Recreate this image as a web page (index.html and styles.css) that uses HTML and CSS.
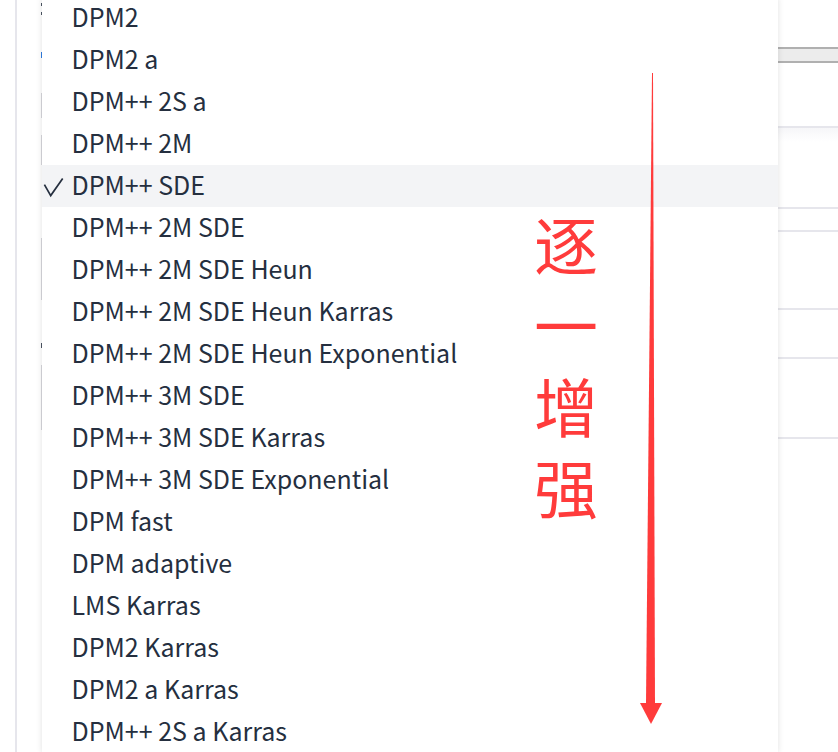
FILE: index.html
```html
<!DOCTYPE html>
<html lang="zh">
<head>
<meta charset="utf-8">
<title>Sampler</title>
<link rel="stylesheet" href="styles.css">
</head>
<body>
<div class="page">
  <div class="rail"></div>
  <div class="form">
    <div class="col-left">
      <div class="mk dark m1"></div>
      <div class="mk dark m2"></div>
      <div class="mk blue m3"></div>
      <div class="mk grey m4"></div>
      <div class="mk grey m5"></div>
      <div class="mk grey m6"></div>
      <div class="mk dark m7"></div>
      <div class="mk grey m8"></div>
    </div>
    <div class="col-right">
      <div class="track"></div>
      <div class="sec s1"></div>
      <div class="sec s2"></div>
      <div class="sec s3"></div>
      <div class="sec s4"></div>
      <div class="sec s5"></div>
      <div class="sec s6"></div>
    </div>
  </div>
</div>

<ul class="menu">
  <li class="opt"><span class="chk"></span><span class="lbl">DPM2</span></li>
  <li class="opt"><span class="chk"></span><span class="lbl">DPM2 a</span></li>
  <li class="opt"><span class="chk"></span><span class="lbl">DPM++ 2S a</span></li>
  <li class="opt"><span class="chk"></span><span class="lbl">DPM++ 2M</span></li>
  <li class="opt selected"><span class="chk"><svg width="30" height="42" viewBox="0 0 30 42"><polyline points="2.4,19.6 8.7,30.6 20.7,13.4" fill="none" stroke="#252f3f" stroke-width="1.7" stroke-linejoin="miter"/></svg></span><span class="lbl">DPM++ SDE</span></li>
  <li class="opt"><span class="chk"></span><span class="lbl">DPM++ 2M SDE</span></li>
  <li class="opt"><span class="chk"></span><span class="lbl">DPM++ 2M SDE Heun</span></li>
  <li class="opt"><span class="chk"></span><span class="lbl">DPM++ 2M SDE Heun Karras</span></li>
  <li class="opt"><span class="chk"></span><span class="lbl">DPM++ 2M SDE Heun Exponential</span></li>
  <li class="opt"><span class="chk"></span><span class="lbl">DPM++ 3M SDE</span></li>
  <li class="opt"><span class="chk"></span><span class="lbl">DPM++ 3M SDE Karras</span></li>
  <li class="opt"><span class="chk"></span><span class="lbl">DPM++ 3M SDE Exponential</span></li>
  <li class="opt"><span class="chk"></span><span class="lbl">DPM fast</span></li>
  <li class="opt"><span class="chk"></span><span class="lbl">DPM adaptive</span></li>
  <li class="opt"><span class="chk"></span><span class="lbl">LMS Karras</span></li>
  <li class="opt"><span class="chk"></span><span class="lbl">DPM2 Karras</span></li>
  <li class="opt"><span class="chk"></span><span class="lbl">DPM2 a Karras</span></li>
  <li class="opt"><span class="chk"></span><span class="lbl">DPM++ 2S a Karras</span></li>
</ul>

<div class="note">
  <div class="ch">逐</div>
  <div class="ch">一</div>
  <div class="ch">增</div>
  <div class="ch">强</div>
</div>

<svg class="arrow" width="838" height="752" viewBox="0 0 838 752">
  <polygon points="652,73 653,73 655,703 646,703" fill="#ff3b3b"/>
  <polygon points="640,703 662,703 651,724" fill="#ff3b3b"/>
</svg>
</body>
</html>
```
FILE: styles.css
```css
html, body {
  margin: 0;
  padding: 0;
  background: #ffffff;
}
body {
  position: relative;
  width: 838px;
  height: 752px;
  overflow: hidden;
  font-family: "Noto Sans CJK SC", "Noto Sans", sans-serif;
}

/* background form (partly hidden by the open menu) */
.page {
  display: flex;
  height: 752px;
}
.rail {
  width: 15px;
  border-right: 2px solid #e6e6ec;
  flex: none;
}
.form {
  flex: 1;
  display: flex;
}
.col-left {
  width: 120px;
  padding-left: 24px;
  display: flex;
  flex-direction: column;
  flex: none;
}
.mk { width: 2px; }
.dark { background: #4b5563; }
.blue { background: #2f7de1; }
.grey { background: #d6d6dc; }
.m1 { margin-top: 3px; height: 3px; }
.m2 { margin-top: 6px; height: 3px; }
.m3 { margin-top: 37px; height: 6px; }
.m4 { margin-top: 35px; height: 25px; }
.m5 { margin-top: 17px; height: 30px; }
.m6 { margin-top: 73px; height: 62px; }
.m7 { margin-top: 43px; height: 5px; }
.m8 { margin-top: 17px; height: 65px; }

.col-right {
  flex: 1;
  display: flex;
  flex-direction: column;
}
.track {
  margin-top: 47px;
  height: 16px;
  box-sizing: border-box;
  border-top: 2px solid #b0b0b0;
  border-bottom: 2px solid #b0b0b0;
  background: #ececec;
}
.sec {
  box-sizing: border-box;
  border-top: 2px solid #e6e6ec;
}
.s1 {
  margin-top: 63px;
  height: 81px;
  background: linear-gradient(#f6f6f8, #ffffff 14px);
}
.s2 { height: 23px; }
.s3 { height: 78px; }
.s4 { height: 49px; }
.s5 { height: 80px; }
.s6 { flex: 1; }

/* open dropdown menu */
.menu {
  position: absolute;
  left: 42px;
  top: -3px;
  width: 736px;
  margin: 0;
  padding: 0;
  list-style: none;
  background: #ffffff;
  box-shadow: 0 0 6px rgba(0, 0, 0, 0.12);
}
.opt {
  height: 42px;
  box-sizing: border-box;
  padding-bottom: 4px;
  display: flex;
  align-items: center;
  font-size: 25px;
  color: #252f3f;
  white-space: nowrap;
}
.opt.selected {
  background: #f3f4f6;
}
.chk {
  width: 29.5px;
  height: 42px;
  flex: none;
  align-self: flex-start;
}
.chk svg { display: block; }

/* red annotation */
.note {
  position: absolute;
  left: 534px;
  top: 210px;
  display: flex;
  flex-direction: column;
  gap: 17px;
  color: #ff3b3b;
  font-family: "Noto Sans CJK SC", sans-serif;
  font-weight: 400;
  font-size: 64px;
  line-height: 64px;
}
.arrow {
  position: absolute;
  left: 0;
  top: 0;
  pointer-events: none;
}
```
